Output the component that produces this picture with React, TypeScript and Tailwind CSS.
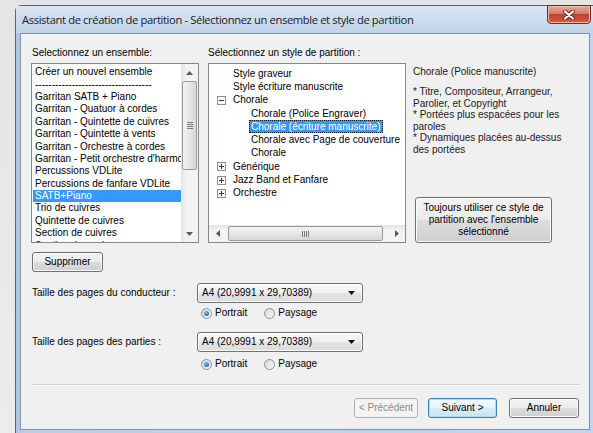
import React from "react";

const ensembles: string[] = [
  "Créer un nouvel ensemble",
  "-----------------------------------",
  "Garritan SATB + Piano",
  "Garritan - Quatuor à cordes",
  "Garritan - Quintette de cuivres",
  "Garritan - Quintette à vents",
  "Garritan - Orchestre à cordes",
  "Garritan - Petit orchestre d'harmonie",
  "Percussions VDLite",
  "Percussions de fanfare VDLite",
  "SATB+Piano",
  "Trio de cuivres",
  "Quintette de cuivres",
  "Section de cuivres",
  "Section de cordes",
];

type TreeRow = {
  label: string;
  child?: boolean;
  toggle?: "minus" | "plus";
  selected?: boolean;
};

const styles: TreeRow[] = [
  { label: "Style graveur" },
  { label: "Style écriture manuscrite" },
  { label: "Chorale", toggle: "minus" },
  { label: "Chorale (Police Engraver)", child: true },
  { label: "Chorale (écriture manuscrite)", child: true, selected: true },
  { label: "Chorale avec Page de couverture", child: true },
  { label: "Chorale", child: true },
  { label: "Générique", toggle: "plus" },
  { label: "Jazz Band et Fanfare", toggle: "plus" },
  { label: "Orchestre", toggle: "plus" },
];

const btn =
  "flex items-center justify-center rounded-[3px] border border-[#707070] bg-[linear-gradient(180deg,#f3f3f3,#ebebeb_50%,#dddddd_50%,#cfcfcf)] shadow-[inset_0_0_0_1px_#fbfbfb]";

function Arrow({ dir }: { dir: "up" | "down" | "left" | "right" }) {
  const d =
    dir === "up"
      ? "M0 4 L3.5 0 L7 4Z"
      : dir === "down"
      ? "M0 0 L7 0 L3.5 4Z"
      : dir === "left"
      ? "M4 0 L4 7 L0 3.5Z"
      : "M0 0 L4 3.5 L0 7Z";
  const w = dir === "up" || dir === "down" ? 7 : 4;
  const h = dir === "up" || dir === "down" ? 4 : 7;
  return (
    <svg width={w} height={h} viewBox={`0 0 ${w} ${h}`}>
      <path d={d} fill="#5a5a5a" />
    </svg>
  );
}

function VScroll() {
  return (
    <div className="flex h-full w-[17px] flex-col bg-[linear-gradient(90deg,#e3e3e3,#f3f3f3_30%,#f3f3f3)]">
      <div className="flex h-[17px] items-center justify-center">
        <Arrow dir="up" />
      </div>
      <div className="flex-1 px-[1px]">
        <div className="flex h-[89px] flex-col items-center justify-center gap-[1px] rounded-[2px] border border-[#9a9a9a] bg-[linear-gradient(90deg,#f2f2f2,#e6e6e6_50%,#d6d6d6)]">
          <div className="h-[1px] w-[6px] bg-[#7a7a7a]" />
          <div className="h-[1px] w-[6px] bg-[#7a7a7a]" />
          <div className="h-[1px] w-[6px] bg-[#7a7a7a]" />
          <div className="h-[1px] w-[6px] bg-[#7a7a7a]" />
        </div>
      </div>
      <div className="flex h-[17px] items-center justify-center">
        <Arrow dir="down" />
      </div>
    </div>
  );
}

function HScroll() {
  return (
    <div className="flex h-[17px] w-full bg-[linear-gradient(180deg,#e3e3e3,#f3f3f3_30%,#f3f3f3)]">
      <div className="flex w-[17px] items-center justify-center">
        <Arrow dir="left" />
      </div>
      <div className="flex-1 py-[1px] pl-[2px] pr-[5px]">
        <div className="flex h-full items-center justify-center gap-[1px] rounded-[2px] border border-[#9a9a9a] bg-[linear-gradient(180deg,#f2f2f2,#e6e6e6_50%,#d6d6d6)]">
          <div className="h-[6px] w-[1px] bg-[#7a7a7a]" />
          <div className="h-[6px] w-[1px] bg-[#7a7a7a]" />
          <div className="h-[6px] w-[1px] bg-[#7a7a7a]" />
          <div className="h-[6px] w-[1px] bg-[#7a7a7a]" />
        </div>
      </div>
      <div className="flex w-[17px] items-center justify-center">
        <Arrow dir="right" />
      </div>
    </div>
  );
}

function Toggle({ kind }: { kind: "minus" | "plus" }) {
  return (
    <svg width="9" height="9" viewBox="0 0 9 9">
      <rect x="0.5" y="0.5" width="8" height="8" fill="#f7f7f7" stroke="#8f8f8f" />
      <path d="M2 4.5 H7" stroke="#3a3a3a" strokeWidth="1" />
      {kind === "plus" && <path d="M4.5 2 V7" stroke="#3a3a3a" strokeWidth="1" />}
    </svg>
  );
}

function Radio({ checked, label }: { checked?: boolean; label: string }) {
  return (
    <div className="flex items-center gap-[3px]">
      <div className="flex h-[11px] w-[11px] items-center justify-center rounded-full border border-[#8e8f8f] bg-[linear-gradient(135deg,#d8d8d8,#f8f8f8)]">
        {checked && (
          <div className="h-[5px] w-[5px] rounded-full bg-[radial-gradient(circle_at_40%_35%,#7fc4f4,#1c6fb8_70%)]" />
        )}
      </div>
      <span>{label}</span>
    </div>
  );
}

function Combo({ value }: { value: string }) {
  return (
    <div className="flex h-[20px] w-[166px] items-center justify-between rounded-[3px] border border-[#707070] bg-[linear-gradient(180deg,#f8f8f8,#f0f0f0_50%,#e3e3e3_50%,#dcdcdc)] pl-[4px] pr-[7px] shadow-[inset_0_0_0_1px_#fcfcfc]">
      <span>{value}</span>
      <svg width="7" height="4" viewBox="0 0 7 4">
        <path d="M0 0 L7 0 L3.5 4Z" fill="#111" />
      </svg>
    </div>
  );
}

export default function App() {
  return (
    <div className="h-[433px] w-[593px] overflow-hidden bg-[linear-gradient(180deg,#e4e4e4,#ececec)] pl-[15px] pt-[5px] font-['Liberation_Sans',Arial,sans-serif] text-[10px] leading-none text-black">
      <div className="flex h-[430px] w-[580px] flex-col rounded-tl-[6px] border border-[#56667a] bg-[linear-gradient(90deg,#aec3dc,#bccfe4_8px,#c4d5e9)] pb-[4px]">
        {/* caption bar */}
        <div className="flex h-[27px] shrink-0 items-start bg-[linear-gradient(180deg,#dbe6f3,#cddcee_50%,#c2d4e9)]">
          <div className="pl-[6px] pt-[8px] font-['Open_Sans',sans-serif] text-[11.2px] tracking-[-0.37px] text-[#1a1a1a]">
            Assistant de création de partition - Sélectionnez un ensemble et style de partition
          </div>
          <div className="ml-auto mr-[3px] -mt-[1px] flex h-[19px] w-[44px] items-center justify-center rounded-b-[4px] border border-[#6e2b22] bg-[linear-gradient(180deg,#e9a99a,#d77b68_45%,#c2402e_50%,#d0604a)] shadow-[inset_0_0_0_1px_#f0b9ad]">
            <svg width="12" height="10" viewBox="0 0 12 10">
              <path d="M2 1.5 L10 8.5 M10 1.5 L2 8.5" stroke="#5b2a23" strokeWidth="4" strokeLinecap="round" />
              <path d="M2 1.5 L10 8.5 M10 1.5 L2 8.5" stroke="#ffffff" strokeWidth="2.2" strokeLinecap="round" />
            </svg>
          </div>
        </div>

        {/* client area */}
        <div className="mx-[4px] flex min-h-0 flex-1 flex-col border border-[#7d91aa] bg-[#f0f0f0] pl-[10px] pr-[8px] pt-[11px]">
          <div className="flex">
            {/* ensembles */}
            <div className="flex w-[168px] flex-col">
              <div className="flex h-[18px] items-start pl-[1px] pt-[3px]">Selectionnez un ensemble:</div>
              <div className="flex h-[180px] border border-[#828790] bg-white">
                <div className="flex-1 overflow-hidden pl-[1px] pt-[2px]">
                  {ensembles.map((e) => (
                    <div
                      key={e}
                      className={
                        e === "SATB+Piano"
                          ? "flex h-[12.4px] items-center whitespace-nowrap bg-[#3399ff] pl-[2px] text-white"
                          : "flex h-[12.4px] items-center whitespace-nowrap pl-[2px]"
                      }
                    >
                      {e}
                    </div>
                  ))}
                </div>
                <VScroll />
              </div>
            </div>

            {/* styles tree */}
            <div className="ml-[9px] flex w-[198px] flex-col">
              <div className="flex h-[18px] items-start pt-[3px]">Sélectionnez un style de partition :</div>
              <div className="flex h-[180px] flex-col border border-[#828790] bg-white">
                <div className="flex-1 overflow-hidden pt-[3px]">
                  {styles.map((s, i) => (
                    <div key={i} className="flex h-[13.3px] items-center whitespace-nowrap">
                      <div className={s.child ? "w-[40px] shrink-0" : "flex w-[22px] shrink-0 pl-[8px]"}>
                        {s.toggle && <Toggle kind={s.toggle} />}
                      </div>
                      <span
                        className={
                          s.selected
                            ? "flex h-[13px] items-center border border-dotted border-[#1a1a1a] bg-[#3399ff] px-[1px] text-white"
                            : "px-[2px]"
                        }
                      >
                        {s.label}
                      </span>
                    </div>
                  ))}
                </div>
                <HScroll />
              </div>
            </div>

            {/* description */}
            <div className="ml-[7px] flex flex-1 flex-col justify-between pt-[21px]">
              <div className="text-[#1a1a1a]">
                <div className="leading-[11.5px]">Chorale (Police manuscrite)</div>
                <div className="mt-[8.5px] leading-[11.5px]">
                  <div>* Titre, Compositeur, Arrangeur,</div>
                  <div>Parolier, et Copyright</div>
                  <div>* Portées plus espacées pour les</div>
                  <div>paroles</div>
                  <div>* Dynamiques placées au-dessus</div>
                  <div>des portées</div>
                </div>
              </div>
              <div className={`${btn} ml-[2px] h-[46px] w-[137px] flex-col text-center leading-[12px]`}>
                <div>Toujours utiliser ce style de</div>
                <div>partition avec l'ensemble</div>
                <div>sélectionné</div>
              </div>
            </div>
          </div>

          <div className={`${btn} mt-[9px] ml-[1px] h-[20px] w-[71px]`}>Supprimer</div>

          {/* page sizes */}
          <div className="mt-[11px] flex items-center pl-[1px]">
            <div className="w-[165px]">Taille des pages du conducteur :</div>
            <Combo value="A4 (20,9991 x 29,70389)" />
          </div>
          <div className="mt-[4px] flex h-[12px] items-center gap-[17px] pl-[170px]">
            <Radio checked label="Portrait" />
            <Radio label="Paysage" />
          </div>

          <div className="mt-[13px] flex items-center pl-[1px]">
            <div className="w-[165px]">Taille des pages des parties :</div>
            <Combo value="A4 (20,9991 x 29,70389)" />
          </div>
          <div className="mt-[6px] flex h-[12px] items-center gap-[17px] pl-[170px]">
            <Radio checked label="Portrait" />
            <Radio label="Paysage" />
          </div>

          <div className="mt-[14px] h-[1px] w-[549px] bg-[#d0d0d0] shadow-[0_1px_0_#fafafa]" />

          <div className="mt-[13px] flex justify-end gap-[10px] pr-[2px]">
            <div className="flex h-[20px] w-[64px] items-center justify-center rounded-[3px] border border-[#adb2b5] bg-[#f4f4f4] text-[#8a8a8a]">
              &lt; Précédent
            </div>
            <div className="flex h-[20px] w-[69px] items-center justify-center rounded-[3px] border border-[#3c7fb1] bg-[linear-gradient(180deg,#f3f9fd,#e7f3fb_50%,#d6ecf9_50%,#cbe5f6)] shadow-[inset_0_0_0_1px_#a9dcf6]">
              Suivant &gt;
            </div>
            <div className={`${btn} ml-[2px] h-[20px] w-[70px]`}>Annuler</div>
          </div>
        </div>
      </div>
    </div>
  );
}
